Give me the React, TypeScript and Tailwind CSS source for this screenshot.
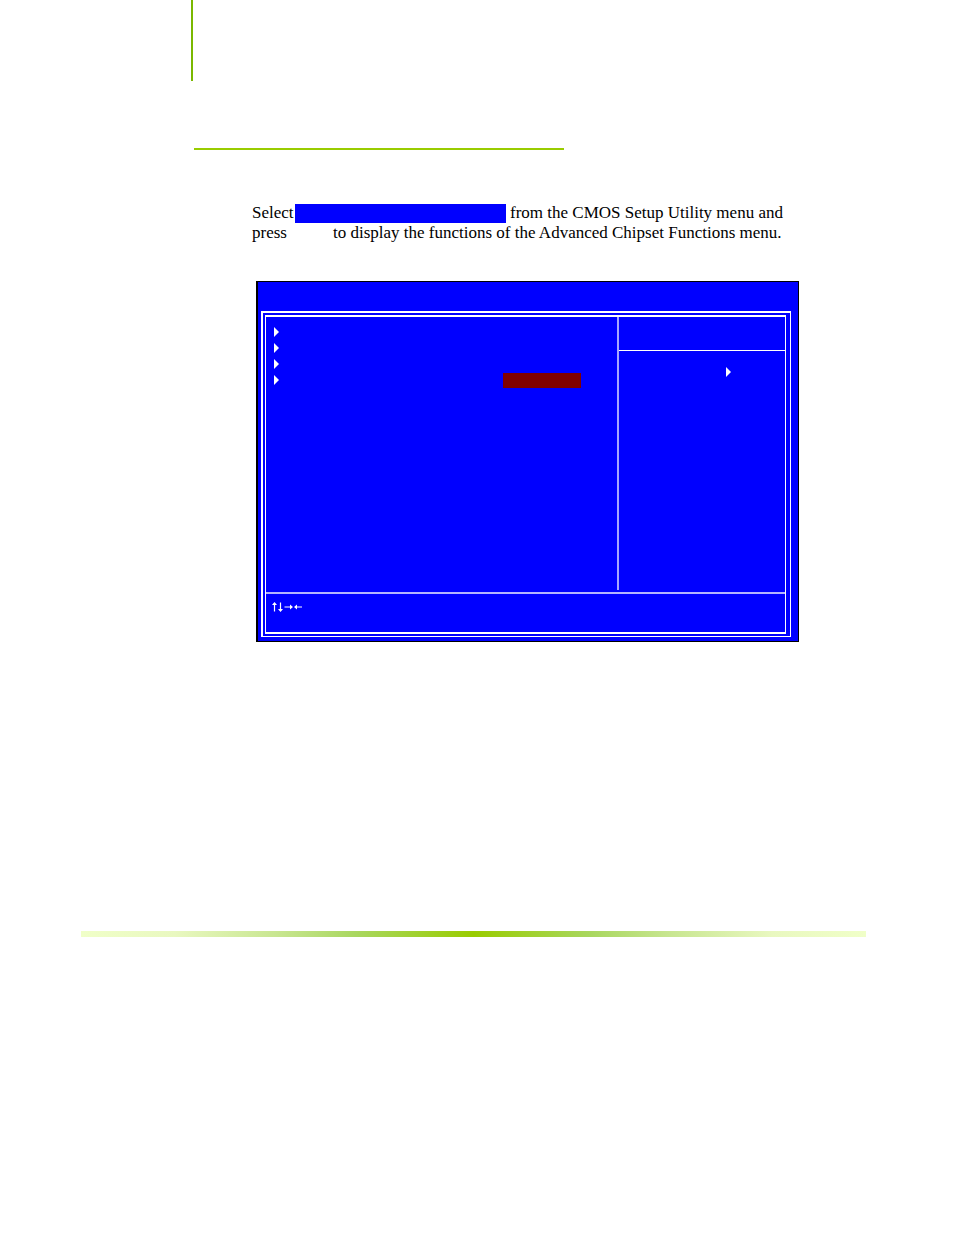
interface MarkerProps {
  className?: string;
}

function Marker({ className = '' }: MarkerProps) {
  return (
    <svg viewBox="0 0 6 10" className={`w-[6px] h-[10px] fill-white ${className}`} aria-hidden="true">
      <path d="M0 0 L5 5 L0 10 Z" />
    </svg>
  );
}

function ArrowKeys() {
  return (
    <svg viewBox="0 0 31 10" className="w-[31px] h-[10px] stroke-white fill-white" role="img" aria-label="Arrow keys">
      <path d="M2.5 9.5 V1 M8.5 0.5 V9" strokeWidth="1.2" />
      <path d="M2.5 0 L5 3 H0 Z M8.5 10 L11 7 H6 Z" stroke="none" />
      <path d="M12.5 5 H20 M23 5 H30" strokeWidth="1.2" />
      <path d="M21 5 L18 2.5 V7.5 Z M22 5 L25 2.5 V7.5 Z" stroke="none" />
    </svg>
  );
}

function Intro() {
  return (
    <div className="ml-[252px] mr-4 text-[17px] leading-5 text-black">
      <p className="flex whitespace-nowrap">
        <span className="w-[43px]">Select</span>
        <span className="w-[211px] h-[19px] mt-px bg-[#0000ff]" />
        <span className="ml-1">from the CMOS Setup Utility menu and</span>
      </p>
      <p className="flex whitespace-nowrap">
        <span className="w-[81px]">press</span>
        <span>to display the functions of the Advanced Chipset Functions menu.</span>
      </p>
    </div>
  );
}

const rows = [
  { id: 1, active: false },
  { id: 2, active: false },
  { id: 3, active: false },
  { id: 4, active: true },
];

function SetupScreen() {
  return (
    <section className="ml-[256px] mr-4 max-w-[543px] bg-[#0000ff] border border-l-2 border-black pt-[29px] pb-1 pl-[3px] pr-[7px]">
      <div className="border border-t-2 border-l-2 border-white pt-[2px] pb-[2px] pl-[2px] pr-1">
        <div className="border-y-2 border-x border-white">
          {/* Items and help */}
          <div className="flex h-[273px]">
            <ul className="flex-1 pt-[7px] pl-[8px]">
              {rows.map((row) => (
                <li key={row.id} className="flex items-center h-4">
                  <Marker />
                  {row.active && <span className="ml-auto mr-9 w-[78px] h-[15px] bg-[#800000]" />}
                </li>
              ))}
            </ul>
            <aside className="w-[168px] border-l-2 border-[#a6a6ff]">
              <div className="h-[34px] border-b border-white" />
              <Marker className="mt-4 ml-[107px]" />
            </aside>
          </div>

          {/* Key legend */}
          <div className="mt-[2px] h-10 border-t-2 border-[#b4b4ff] pl-[6px] pt-2">
            <ArrowKeys />
          </div>
        </div>
      </div>
    </section>
  );
}

export default function App() {
  return (
    <main className="min-h-screen bg-white pb-8 font-['Liberation_Serif',serif]">
      <div className="ml-[191px] w-[2px] h-[81px] bg-[#7ab800]" />
      <div className="mt-[67px] ml-[194px] max-w-[370px] h-[2px] bg-[#99cc00]" />
      <div className="mt-[53px]">
        <Intro />
      </div>
      <div className="mt-[38px]">
        <SetupScreen />
      </div>
      <footer className="mt-[289px] ml-[81px] mr-[88px] h-[6px] bg-[linear-gradient(to_right,#f0ffc8,#e9f8c0_12%,#c8e690_25%,#a9d75f_35%,#99cc00_50%,#a9d75f_65%,#c8e690_75%,#e9f8c0_88%,#f0ffc8)]" />
    </main>
  );
}
